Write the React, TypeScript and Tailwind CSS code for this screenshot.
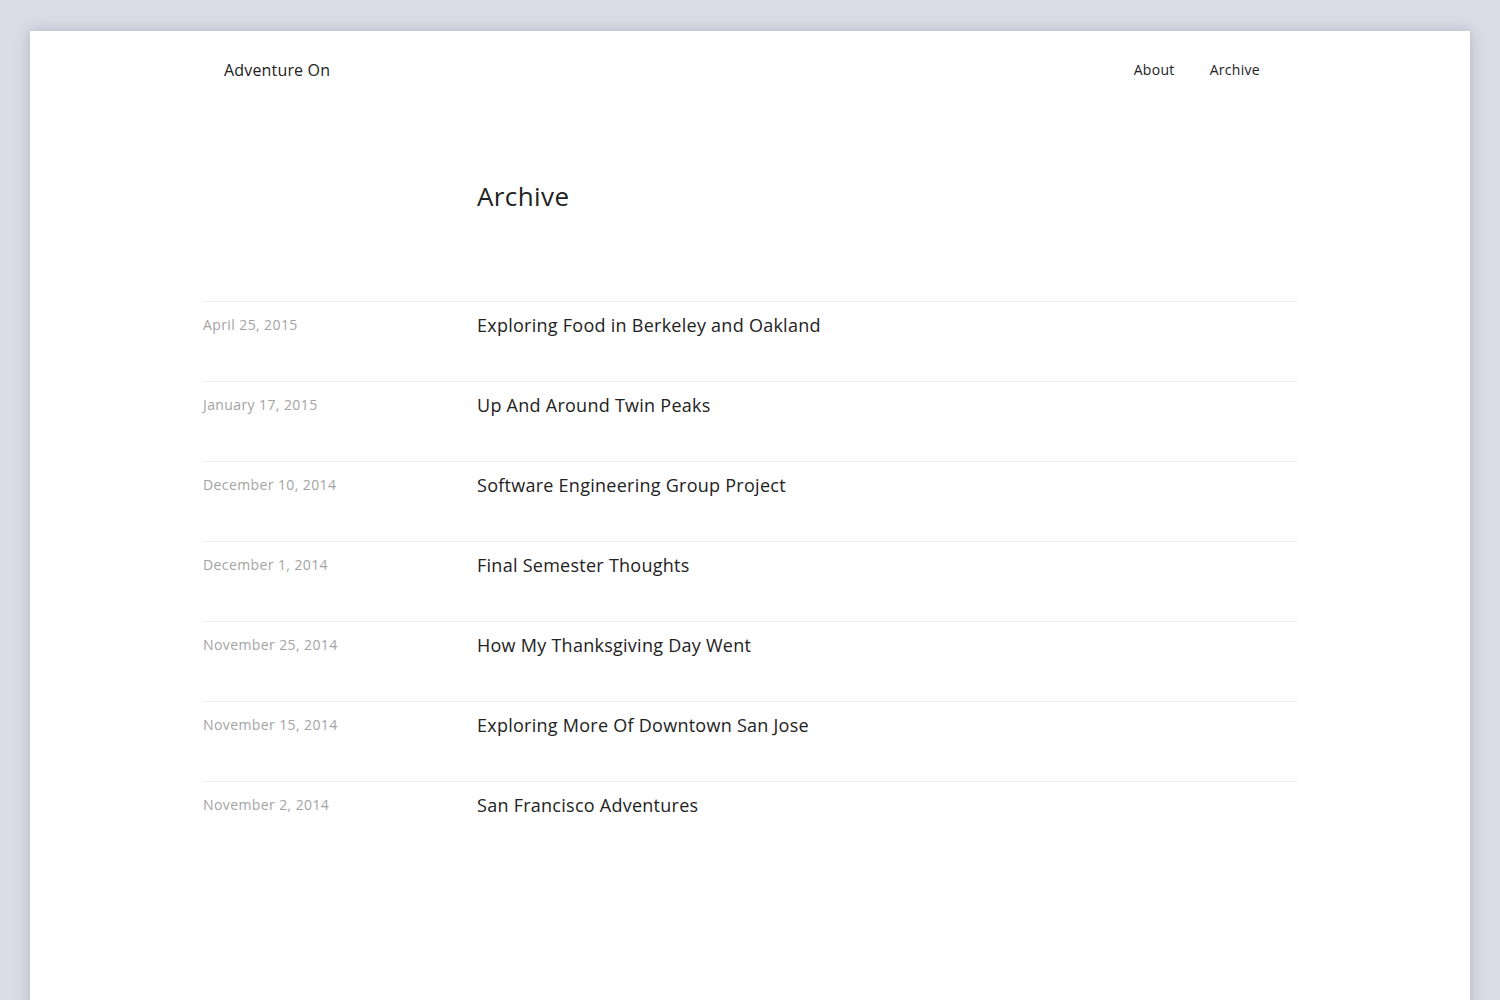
const POSTS = [
  { date: "April 25, 2015", title: "Exploring Food in Berkeley and Oakland" },
  { date: "January 17, 2015", title: "Up And Around Twin Peaks" },
  { date: "December 10, 2014", title: "Software Engineering Group Project" },
  { date: "December 1, 2014", title: "Final Semester Thoughts" },
  { date: "November 25, 2014", title: "How My Thanksgiving Day Went" },
  { date: "November 15, 2014", title: "Exploring More Of Downtown San Jose" },
  { date: "November 2, 2014", title: "San Francisco Adventures" },
];

export default function App() {
  return (
    <div
      className="h-[1000px] overflow-hidden bg-[#dcdce6] px-[30px] pt-[31px]"
      style={{ fontFamily: '"Open Sans", "Lato", sans-serif' }}
    >
      <div className="min-h-[1100px] bg-white shadow-[0_0_14px_rgba(60,60,90,0.25)]">
        <div className="mx-auto w-[1094px]">
          {/* Header */}
          <header className="flex items-center justify-between h-[78px]">
            <a className="pl-[21px] text-[16px] tracking-[0.17px] text-[#222]">Adventure On</a>
            <nav className="flex items-center -mt-[2px] pr-[37px] text-[14px] tracking-[0.3px] text-[#222]">
              <a className="px-[17px] py-[10px] rounded-full">About</a>
              <a className="pl-[18px] py-[10px] rounded-full">Archive</a>
            </nav>
          </header>

          {/* Title */}
          <div className="pl-[274px] pt-[69px] h-[192px]">
            <h1 className="text-[26px] leading-[36px] tracking-[0.4px] text-[#222]">Archive</h1>
          </div>

          {/* Posts */}
          <ul>
            {POSTS.map((p) => (
              <li key={p.title} className="flex h-[80px] border-t border-[#ebebeb] pt-[12px]">
                <div className="w-[274px] text-[14px] leading-[22px] tracking-[0.4px] text-[#a3a3a3]">{p.date}</div>
                <div className="-mt-[1px] text-[18px] leading-[24px] tracking-[0.26px] text-[#222]">{p.title}</div>
              </li>
            ))}
          </ul>
        </div>
      </div>
    </div>
  );
}
